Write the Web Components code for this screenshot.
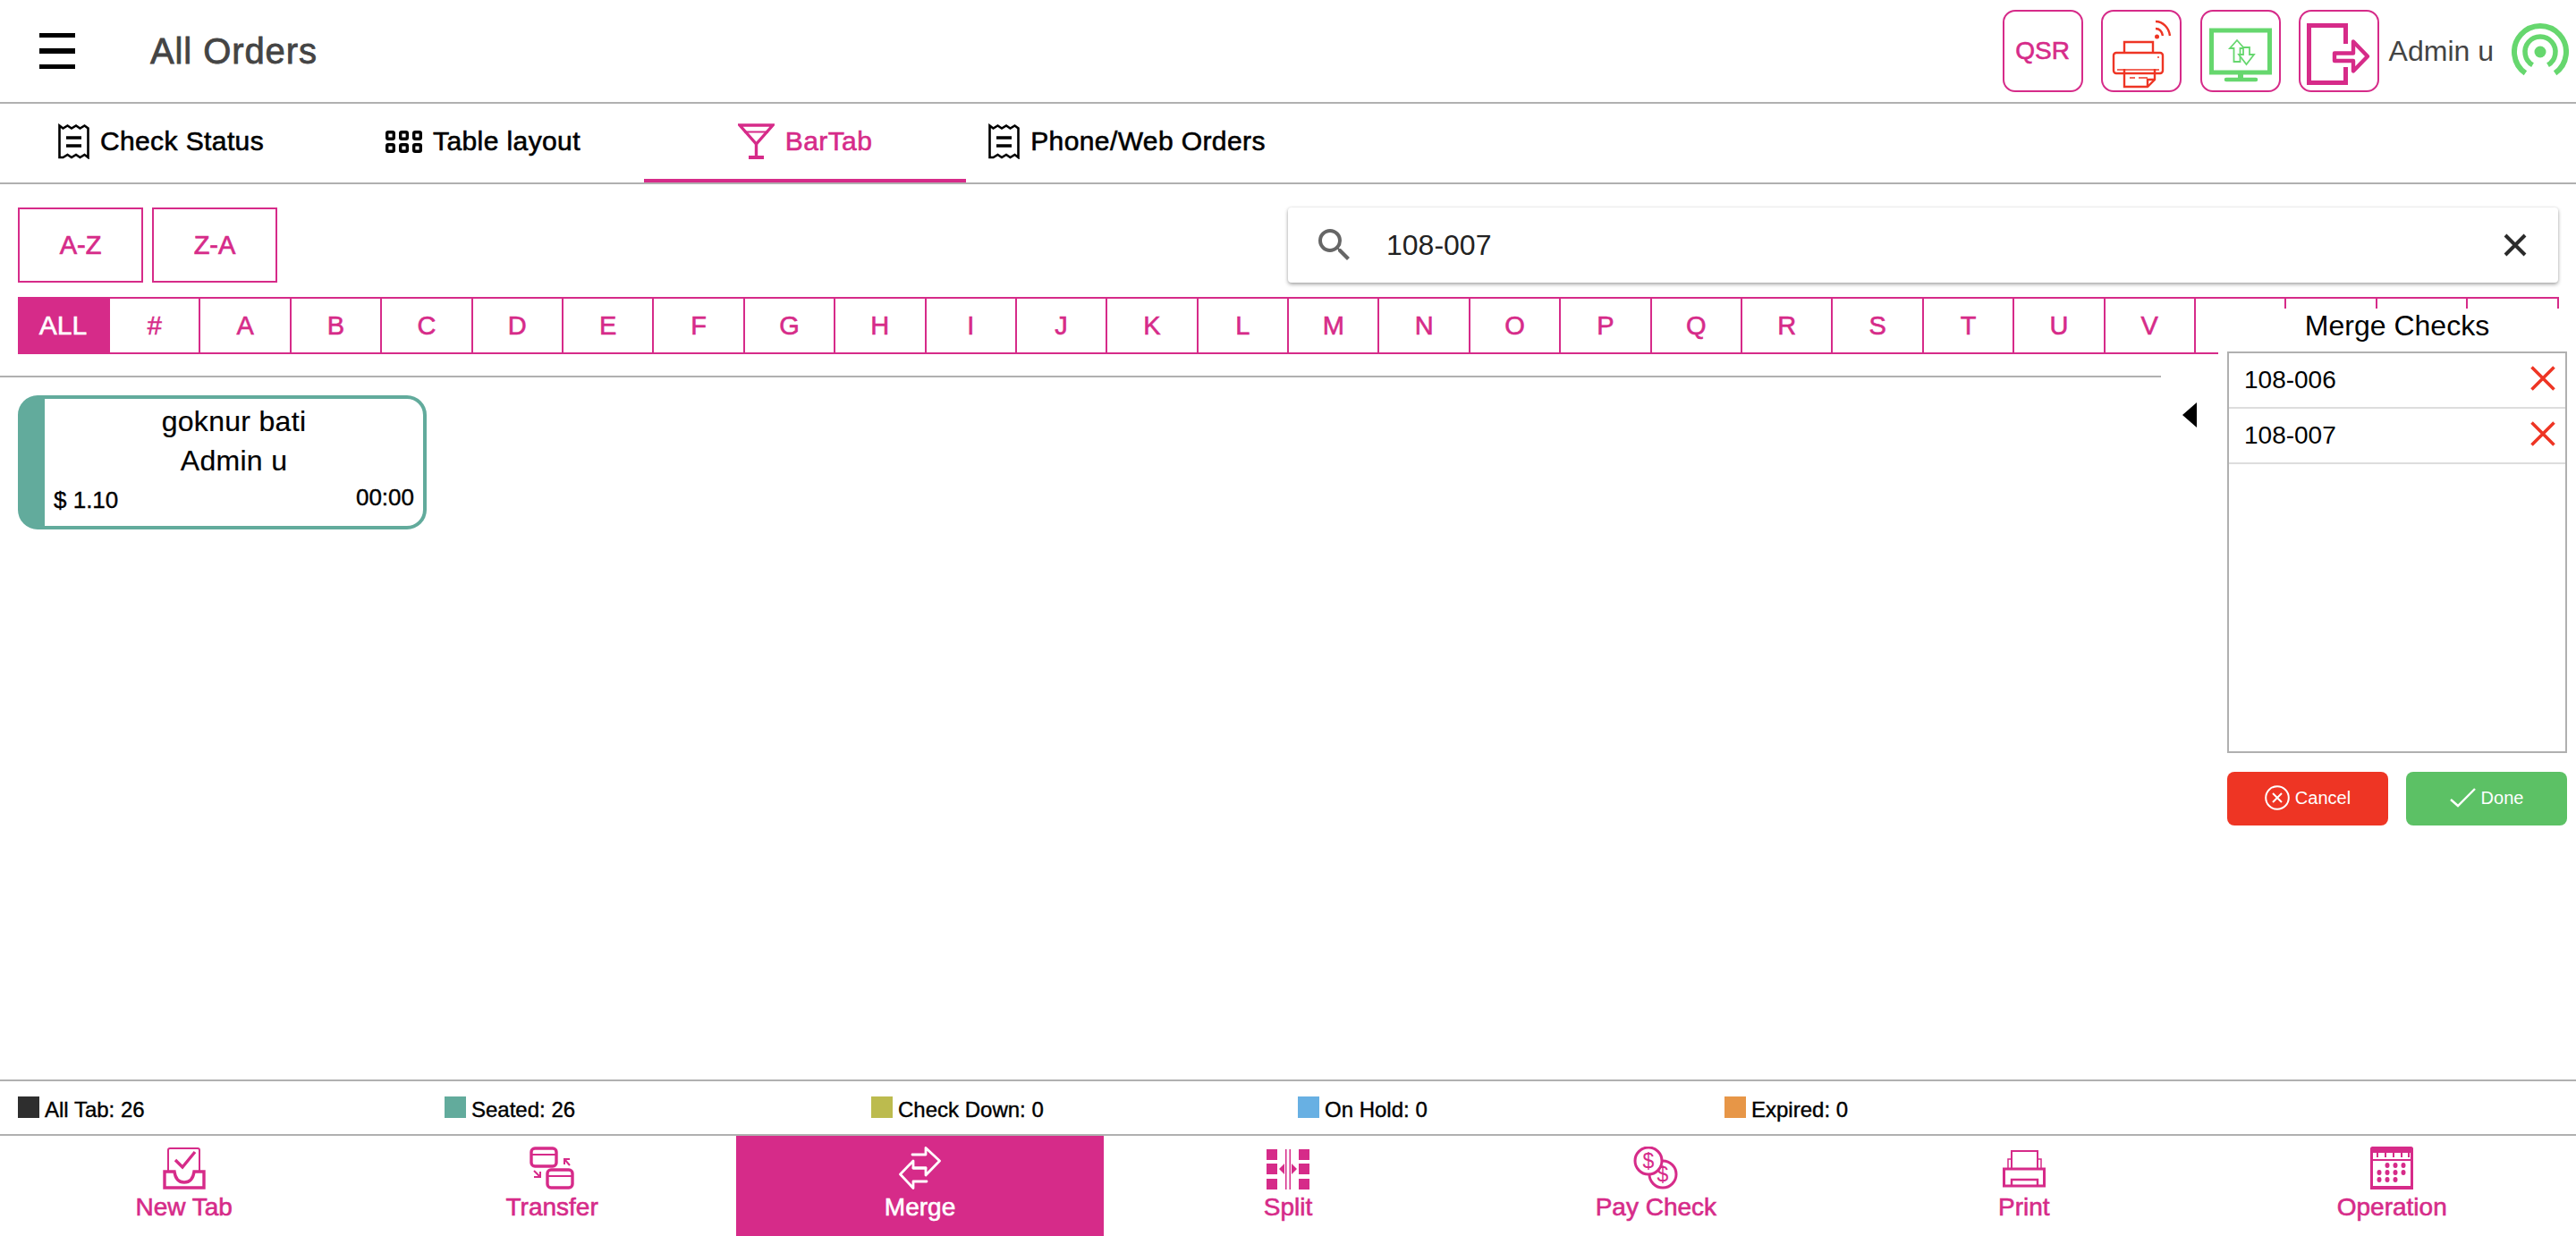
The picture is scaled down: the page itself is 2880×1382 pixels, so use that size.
<!DOCTYPE html>
<html lang="en">
<head>
<meta charset="utf-8">
<title>All Orders</title>
<style>
  html, body { margin: 0; height: 100%; background: #fff; }
  body { font-family: "Liberation Sans", Arial, sans-serif; }
</style>
</head>
<body>
<pos-app></pos-app>

<script>
const PINK = "#d62b89";

// icon markup, drawn in the pixel size of the reference
const ICONS = {
  receipt: `<svg width="35" height="40" viewBox="0 0 35 40" fill="none" stroke="currentColor" stroke-width="2.6"><path d="M1.5 38V2.5l4 3 5-3 4.500 3 5-3 4.500 3 5-3 4 3V38l-4-3-5 3-4.500-3-5 3-4.500-3-5 3z"/><path d="M9 16h17M9 25h17" stroke-width="3.400"/></svg>`,
  table: `<svg width="41" height="25" viewBox="0 0 41 25" fill="none" stroke="currentColor" stroke-width="3.400"><rect x="1.700" y="1.700" width="7.600" height="7.600" rx="1.500"/><rect x="16.700" y="1.700" width="7.600" height="7.600" rx="1.500"/><rect x="31.700" y="1.700" width="7.600" height="7.600" rx="1.500"/><rect x="1.700" y="15.700" width="7.600" height="7.600" rx="1.500"/><rect x="16.700" y="15.700" width="7.600" height="7.600" rx="1.500"/><rect x="31.700" y="15.700" width="7.600" height="7.600" rx="1.500"/></svg>`,
  cocktail: `<svg width="41" height="40" viewBox="0 0 41 40" fill="none" stroke="currentColor" stroke-width="3.400"><path d="M2 2h37L20.500 23z"/><path d="M7 9.500h27" stroke-width="2"/><path d="M20.500 23v14"/><path d="M12 38h17" stroke-width="4"/></svg>`,
  search: `<svg width="48" height="48" viewBox="0 0 24 24" fill="#666"><path d="M15.500 14h-.79l-.28-.27A6.470 6.470 0 0 0 16 9.500 6.500 6.500 0 1 0 9.500 16c1.610 0 3.090-.59 4.230-1.570l.27.28v.79l5 4.990L20.490 19l-4.990-5zm-6 0C7.010 14 5 11.990 5 9.500S7.010 5 9.500 5 14 7.010 14 9.500 11.990 14 9.500 14z"/></svg>`,
  clear: `<svg width="26" height="26" viewBox="0 0 26 26" stroke="#2b2b2b" stroke-width="4"><path d="M2 2l22 22M24 2L2 24"/></svg>`,
  remove: `<svg width="28" height="28" viewBox="0 0 28 28" stroke="#ee3524" stroke-width="3.600"><path d="M1.500 1.500l25 25M26.500 1.500l-25 25"/></svg>`,
  cancel: `<svg width="28" height="28" viewBox="0 0 28 28" fill="none" stroke="#fff" stroke-width="2"><circle cx="14" cy="14" r="12.800"/><path d="M9 9l10 10M19 9L9 19"/></svg>`,
  done: `<svg width="29" height="22" viewBox="0 0 29 22" fill="none" stroke="#fff" stroke-width="2.400"><path d="M1 13l8 7L28 1"/></svg>`,
  printer: `<svg width="86" height="89" viewBox="0 0 86 89" fill="none" stroke="#ee3524" stroke-width="2.400"><g transform="translate(0 3)"><path d="M24 43V31h32v12"/><rect x="12" y="43" width="55" height="23" rx="3"/><path d="M16 62h47" stroke-width="1.400"/><path d="M24 61v20h26l8-8V61"/><path d="M50 81v-8h8"/><path d="M30 66h3M36 66h12M30 71h6M40 71h10" stroke-width="1.600"/><circle cx="62" cy="48" r="1" fill="#ee3524" stroke="none"/></g><g transform="translate(-2 -2)"><circle cx="62.500" cy="30" r="2.500" fill="#ee3524" stroke="none"/><path d="M61 21c4 0 7 3 8 8"/><path d="M61 13c8 0 15 7 16 16"/></g></svg>`,
  monitor: `<svg width="86" height="89" viewBox="0 0 86 89" fill="none" stroke="#66d76e"><rect x="10.500" y="21" width="65" height="47" stroke-width="5"/><path d="M43 70v5" stroke-width="6"/><path d="M27 76h33" stroke-width="4.500" stroke-linecap="round"/><path d="M31 41l8-9 8 9h-4.500v15h-7V41z" stroke-width="1.800"/><path d="M41 48h5V40h7v8h5l-8.500 11z" stroke-width="1.800" fill="#fff"/></svg>`,
  logout: `<svg width="86" height="89" viewBox="0 0 86 89" fill="none" stroke="${PINK}"><path d="M50.500 36V15.500H9.500v64H50.500V62" stroke-width="5"/><path d="M38 46.500H59V33.500L75 50 59 66.500V55H38z" stroke-width="4.400" stroke-linejoin="round"/></svg>`,
  signal: `<svg width="64" height="62" viewBox="0 0 64 62" fill="none" stroke="#66d76e"><path d="M15.400 55.800A29 29 0 1 1 48.600 55.800" stroke-width="6"/><path d="M23.500 46.700A17 17 0 1 1 40.500 46.700" stroke-width="5.500"/><circle cx="32" cy="32" r="6.500" fill="#66d76e" stroke="none"/></svg>`,
  newtab: `<svg width="48" height="47" viewBox="0 0 48 47" fill="none" stroke="currentColor" stroke-width="2"><path d="M6 27V3a2 2 0 0 1 2-2h31a2 2 0 0 1 2 2v24"/><path d="M14 14l8 8L36 5" stroke-width="3.400"/><path d="M13 27H2v18h44V27H35c-1 8-5 12-11 12s-10-4-11-12z" stroke-width="3.400" fill="#fff"/></svg>`,
  transfer: `<svg width="50" height="48" viewBox="0 0 50 48" fill="none" stroke="currentColor" stroke-width="3.400"><rect x="2" y="2" width="28" height="20" rx="4"/><path d="M2 9h28" stroke-width="2"/><rect x="20" y="26" width="28" height="20" rx="4"/><path d="M20 33h28" stroke-width="2"/><path d="M45 21l-6-7M39 20v-6h6M5 27l7 7M12 28v6H5" stroke-width="2"/></svg>`,
  merge: `<svg width="47" height="48" viewBox="0 0 47 48" fill="none" stroke="currentColor" stroke-width="2.800" stroke-linecap="round" stroke-linejoin="round"><path d="M15 9h15V1.500L45.500 16 30 32v-8H16"/><path d="M31 39H16v7.500L1.500 31 16 16v8h14"/></svg>`,
  split: `<svg width="48" height="47" viewBox="0 0 48 47" fill="currentColor"><path d="M0 2h12v12H0zM0 18h12v12H0zM0 35h12v12H0zM36 2h12v12H36zM36 18h12v12H36zM36 35h12v12H36z"/><path d="M21 2h1.500v45H21zM25.500 2H27v45h-1.500z"/><path d="M20 18v12l-6-6zM28 18v12l6-6z"/></svg>`,
  paycheck: `<svg width="50" height="48" viewBox="0 0 50 48" fill="none" stroke="currentColor" stroke-width="3"><circle cx="33" cy="31" r="15" fill="#fff"/><text x="33" y="39" text-anchor="middle" font-family="Liberation Sans" font-size="23" fill="currentColor" stroke="none">$</text><circle cx="17" cy="16" r="15" fill="#fff"/><text x="17" y="24" text-anchor="middle" font-family="Liberation Sans" font-size="23" fill="currentColor" stroke="none">$</text></svg>`,
  print: `<svg width="48" height="43" viewBox="0 0 48 43" fill="none" stroke="currentColor"><path d="M10 22V2h29v20" stroke-width="2"/><path d="M6 22V11h4M43 22V11h-4" stroke-width="1.500"/><path d="M1.500 22h45v19h-45z" stroke-width="3"/><path d="M10 41v-7h29v7" stroke-width="2.400"/></svg>`,
  operation: `<svg width="48" height="48" viewBox="0 0 48 48" fill="none" stroke="currentColor"><rect x="1.500" y="1.500" width="45" height="45" rx="1" stroke-width="3"/><path d="M0 2h48v5H0z" fill="currentColor" stroke="none"/><path d="M0 44h48v4H0z" fill="currentColor" stroke="none"/><path d="M1 15h46" stroke-width="2"/><path d="M8 7v5M17 7v5M26 7v5M35 7v5M43 7v5" stroke-width="2"/><g fill="currentColor" stroke="none"><ellipse cx="19" cy="21" rx="2.500" ry="3"/><ellipse cx="28" cy="21" rx="2.500" ry="3"/><ellipse cx="37" cy="21" rx="2.500" ry="3"/><ellipse cx="10" cy="29" rx="2.500" ry="3"/><ellipse cx="19" cy="29" rx="2.500" ry="3"/><ellipse cx="28" cy="29" rx="2.500" ry="3"/><ellipse cx="37" cy="29" rx="2.500" ry="3"/><ellipse cx="10" cy="37" rx="2.500" ry="3"/><ellipse cx="19" cy="37" rx="2.500" ry="3"/><ellipse cx="28" cy="37" rx="2.500" ry="3"/></g></svg>`,
};

class AppIcon extends HTMLElement {
  constructor() {
    super();
    const shadow = this.attachShadow({ mode: "open" });
    shadow.innerHTML = `
    <style>
      :host { display: inline-flex; flex: none; line-height: 0; }
    </style>
    ${ICONS[this.getAttribute("name")] || ""}
    `;
  }
}

class TopBar extends HTMLElement {
  constructor() {
    super();
    const shadow = this.attachShadow({ mode: "open" });
    shadow.innerHTML = `
    <style>
      :host { display: flex; align-items: center; height: 114px; border-bottom: 2px solid #b0b0b0; padding: 0 8px 0 44px; box-sizing: content-box; }
      .burger { width: 40px; display: flex; flex-direction: column; gap: 12px; }
      .burger i { display: block; height: 5.500px; background: #000; }
      h1 { margin: 0 0 0 84px; font-size: 40px; font-weight: 400; letter-spacing: .9px; color: #444; -webkit-text-stroke: .8px #444; }
      .right { margin-left: auto; display: flex; align-items: center; gap: 20.500px; }
      .box { width: 90px; height: 92px; box-sizing: border-box; border: 2px solid ${PINK}; border-radius: 14px; display: flex; align-items: center; justify-content: center; color: ${PINK}; font-size: 28px; -webkit-text-stroke: .6px ${PINK}; }
      .user { display: flex; align-items: center; gap: 20px; margin-left: -10px; font-size: 32px; color: #444; }
    </style>
    <div class="burger"><i></i><i></i><i></i></div>
    <h1>All Orders</h1>
    <div class="right">
      <div class="box">QSR</div>
      <div class="box"><app-icon name="printer"></app-icon></div>
      <div class="box"><app-icon name="monitor"></app-icon></div>
      <div class="box"><app-icon name="logout"></app-icon></div>
      <div class="user">Admin u<app-icon name="signal"></app-icon></div>
    </div>
    `;
  }
}

class NavTab extends HTMLElement {
  constructor() {
    super();
    const shadow = this.attachShadow({ mode: "open" });
    shadow.innerHTML = `
    <style>
      :host { display: flex; align-items: center; justify-content: center; gap: 12px; width: 360px; height: 84px; box-sizing: content-box; font-size: 30px; letter-spacing: .4px; color: #000; -webkit-text-stroke: .6px currentColor; border-bottom: 4px solid transparent; }
      :host([active]) { color: ${PINK}; border-bottom-color: ${PINK}; }
    </style>
    <slot></slot>
    `;
  }
}

class NavTabs extends HTMLElement {
  constructor() {
    super();
    const shadow = this.attachShadow({ mode: "open" });
    shadow.innerHTML = `
    <style>
      :host { display: flex; height: 88px; border-bottom: 2px solid #b0b0b0; }
    </style>
    <slot></slot>
    `;
  }
}

class SortButton extends HTMLElement {
  constructor() {
    super();
    const shadow = this.attachShadow({ mode: "open" });
    shadow.innerHTML = `
    <style>
      :host { display: flex; align-items: center; justify-content: center; width: 140px; height: 84px; box-sizing: border-box; border: 2px solid ${PINK}; color: ${PINK}; font-size: 29px; -webkit-text-stroke: .7px ${PINK}; }
    </style>
    <slot></slot>
    `;
  }
}

class SearchBox extends HTMLElement {
  constructor() {
    super();
    const shadow = this.attachShadow({ mode: "open" });
    shadow.innerHTML = `
    <style>
      :host { display: flex; align-items: center; width: 1420px; height: 84px; box-sizing: border-box; padding: 0 35px 0 28px; border-radius: 4px; background: #fff; box-shadow: 0 2px 4px rgba(0,0,0,.35), 0 0 3px rgba(0,0,0,.08); font-size: 32px; color: #222; }
      .value { margin-left: 34px; flex: 1; }
    </style>
    <app-icon name="search"></app-icon>
    <span class="value">${this.getAttribute("value") || ""}</span>
    <app-icon name="clear"></app-icon>
    `;
  }
}

class AlphaBar extends HTMLElement {
  constructor() {
    super();
    const shadow = this.attachShadow({ mode: "open" });
    // W to Z sit under the merge panel, so their cells stay empty
    const cells = ["ALL", "#", ..."ABCDEFGHIJKLMNOPQRSTUV", "", "", "", ""];
    shadow.innerHTML = `
    <style>
      :host { display: grid; grid-template-columns: 103px repeat(27, 101.400px); height: 64px; margin: 16px 0 0 20px; color: ${PINK}; font-size: 29px; -webkit-text-stroke: .6px ${PINK}; }
      div { display: flex; align-items: center; justify-content: center; box-sizing: border-box; border: solid ${PINK}; border-width: 2px 2px 2px 0; }
      div.on { background: ${PINK}; color: #fff; -webkit-text-stroke: .6px #fff; font-size: 30px; }
    </style>
    ${cells
      .map((c, i) => `<div class="${i == 0 ? "on" : ""}">${c}</div>`)
      .join("")}
    `;
  }
}

class OrderCard extends HTMLElement {
  constructor() {
    super();
    const shadow = this.attachShadow({ mode: "open" });
    shadow.innerHTML = `
    <style>
      :host { display: block; width: 457px; height: 150px; box-sizing: border-box; margin: 20px 0 0 20px; border: 4px solid #62ab9c; border-left-width: 30px; border-radius: 22px; position: relative; color: #000; }
      .name { text-align: center; font-size: 32px; line-height: 44px; letter-spacing: .3px; -webkit-text-stroke: .2px #000; padding-top: 3px; }
      .amount, .time { position: absolute; font-size: 26px; line-height: 30px; -webkit-text-stroke: .4px #000; }
      .amount { left: 10px; bottom: 14px; }
      .time { right: 10px; bottom: 17px; }
    </style>
    <div class="name">${this.getAttribute("name")}</div>
    <div class="name" style="padding-top:0">${this.getAttribute("user")}</div>
    <span class="amount">${this.getAttribute("amount")}</span>
    <span class="time">${this.getAttribute("time")}</span>
    `;
  }
}

class MergePanel extends HTMLElement {
  constructor() {
    super();
    const shadow = this.attachShadow({ mode: "open" });
    const checks = (this.getAttribute("checks") || "").split(",");
    shadow.innerHTML = `
    <style>
      :host { position: absolute; left: 2480px; top: 345px; width: 400px; box-sizing: border-box; padding: 0 10px; background: #fff; color: #000; }
      h2 { margin: 0; height: 48px; line-height: 38px; font-size: 32px; font-weight: 400; text-align: center; }
      .list { height: 449px; box-sizing: border-box; border: 2px solid #b0b0b0; }
      .row { display: flex; align-items: center; justify-content: space-between; height: 62px; box-sizing: border-box; border-bottom: 2px solid #ddd; padding: 0 11px 4px 17px; font-size: 28px; }
      .row span { padding-top: 4px; }
      .btns { display: flex; gap: 20px; margin-top: 21px; }
      .btn { flex: 1; height: 60px; border-radius: 8px; display: flex; align-items: center; justify-content: center; gap: 6px; color: #fff; font-size: 20px; padding-bottom: 2px; box-sizing: border-box; }
      .cancel { background: #ee3524; }
      .done { background: #5cc165; }
    </style>
    <h2>Merge Checks</h2>
    <div class="list">
      ${checks
        .map(
          (c) => `
        <div class="row"><span>${c}</span><app-icon name="remove"></app-icon></div>
        `
        )
        .join("")}
    </div>
    <div class="btns">
      <div class="btn cancel"><app-icon name="cancel"></app-icon>Cancel</div>
      <div class="btn done"><app-icon name="done"></app-icon>Done</div>
    </div>
    `;
  }
}

class LegendItem extends HTMLElement {
  constructor() {
    super();
    const shadow = this.attachShadow({ mode: "open" });
    shadow.innerHTML = `
    <style>
      :host { display: flex; width: 477px; font-size: 24px; color: #000; -webkit-text-stroke: .4px #000; }
      i { width: 24px; height: 24px; background: ${this.getAttribute("color")}; margin-right: 6px; }
      span { line-height: 28px; padding-top: 1px; }
    </style>
    <i></i><span><slot></slot></span>
    `;
  }
}

class LegendBar extends HTMLElement {
  constructor() {
    super();
    const shadow = this.attachShadow({ mode: "open" });
    shadow.innerHTML = `
    <style>
      :host { display: flex; height: 59px; box-sizing: content-box; border-top: 2px solid #b0b0b0; border-bottom: 2px solid #b0b0b0; padding-left: 20px; }
      .in { display: flex; padding-top: 17px; }
    </style>
    <div class="in"><slot></slot></div>
    `;
  }
}

class ActionItem extends HTMLElement {
  constructor() {
    super();
    const shadow = this.attachShadow({ mode: "open" });
    shadow.innerHTML = `
    <style>
      :host { flex: 1; display: flex; flex-direction: column; align-items: center; height: 112px; box-sizing: border-box; padding-top: 12px; color: ${PINK}; font-size: 28px; -webkit-text-stroke: .6px currentColor; }
      :host([active]) { background: ${PINK}; color: #fff; }
      .ic { height: 48px; display: flex; align-items: center; }
      .label { margin-top: 3px; line-height: 34px; }
    </style>
    <div class="ic"><app-icon name="${this.getAttribute("icon")}"></app-icon></div>
    <div class="label"><slot></slot></div>
    `;
  }
}

class PosApp extends HTMLElement {
  constructor() {
    super();
    const shadow = this.attachShadow({ mode: "open" });
    shadow.innerHTML = `
    <style>
      :host { display: flex; flex-direction: column; height: 1382px; position: relative; overflow: hidden; font-family: "Liberation Sans", Arial, sans-serif; }
      .tools { display: flex; gap: 10px; margin: 26px 20px 0 20px; }
      .tools search-box { margin-left: auto; }
      .main { flex: 1; display: flex; margin-top: 24px; }
      .orders { width: 2416px; border-top: 2px solid #b0b0b0; }
      .toggle { width: 0; height: 0; margin: 30px 0 0 24px; border: 14px solid transparent; border-left-width: 0; border-right: 16px solid #000; }
      .actions { display: flex; }
    </style>
    <top-bar></top-bar>
    <nav-tabs>
      <nav-tab><app-icon name="receipt"></app-icon>Check Status</nav-tab>
      <nav-tab><app-icon name="table"></app-icon>Table layout</nav-tab>
      <nav-tab active><app-icon name="cocktail"></app-icon>BarTab</nav-tab>
      <nav-tab><app-icon name="receipt"></app-icon>Phone/Web Orders</nav-tab>
    </nav-tabs>
    <div class="tools">
      <sort-button>A-Z</sort-button>
      <sort-button>Z-A</sort-button>
      <search-box value="108-007"></search-box>
    </div>
    <alpha-bar></alpha-bar>
    <div class="main">
      <div class="orders">
        <order-card name="goknur bati" user="Admin u" amount="$ 1.10" time="00:00"></order-card>
      </div>
      <div class="toggle"></div>
    </div>
    <merge-panel checks="108-006,108-007"></merge-panel>
    <legend-bar>
      <legend-item color="#2e2e2e">All Tab: 26</legend-item>
      <legend-item color="#62ab9c">Seated: 26</legend-item>
      <legend-item color="#bcbb4e">Check Down: 0</legend-item>
      <legend-item color="#68b0e3">On Hold: 0</legend-item>
      <legend-item color="#e79647">Expired: 0</legend-item>
    </legend-bar>
    <div class="actions">
      <action-item icon="newtab">New Tab</action-item>
      <action-item icon="transfer">Transfer</action-item>
      <action-item icon="merge" active>Merge</action-item>
      <action-item icon="split">Split</action-item>
      <action-item icon="paycheck">Pay Check</action-item>
      <action-item icon="print">Print</action-item>
      <action-item icon="operation">Operation</action-item>
    </div>
    `;
  }
}

// let the browser know about the custom elements
customElements.define("app-icon", AppIcon);
customElements.define("top-bar", TopBar);
customElements.define("nav-tab", NavTab);
customElements.define("nav-tabs", NavTabs);
customElements.define("sort-button", SortButton);
customElements.define("search-box", SearchBox);
customElements.define("alpha-bar", AlphaBar);
customElements.define("order-card", OrderCard);
customElements.define("merge-panel", MergePanel);
customElements.define("legend-item", LegendItem);
customElements.define("legend-bar", LegendBar);
customElements.define("action-item", ActionItem);
customElements.define("pos-app", PosApp);
</script>
</body>
</html>
